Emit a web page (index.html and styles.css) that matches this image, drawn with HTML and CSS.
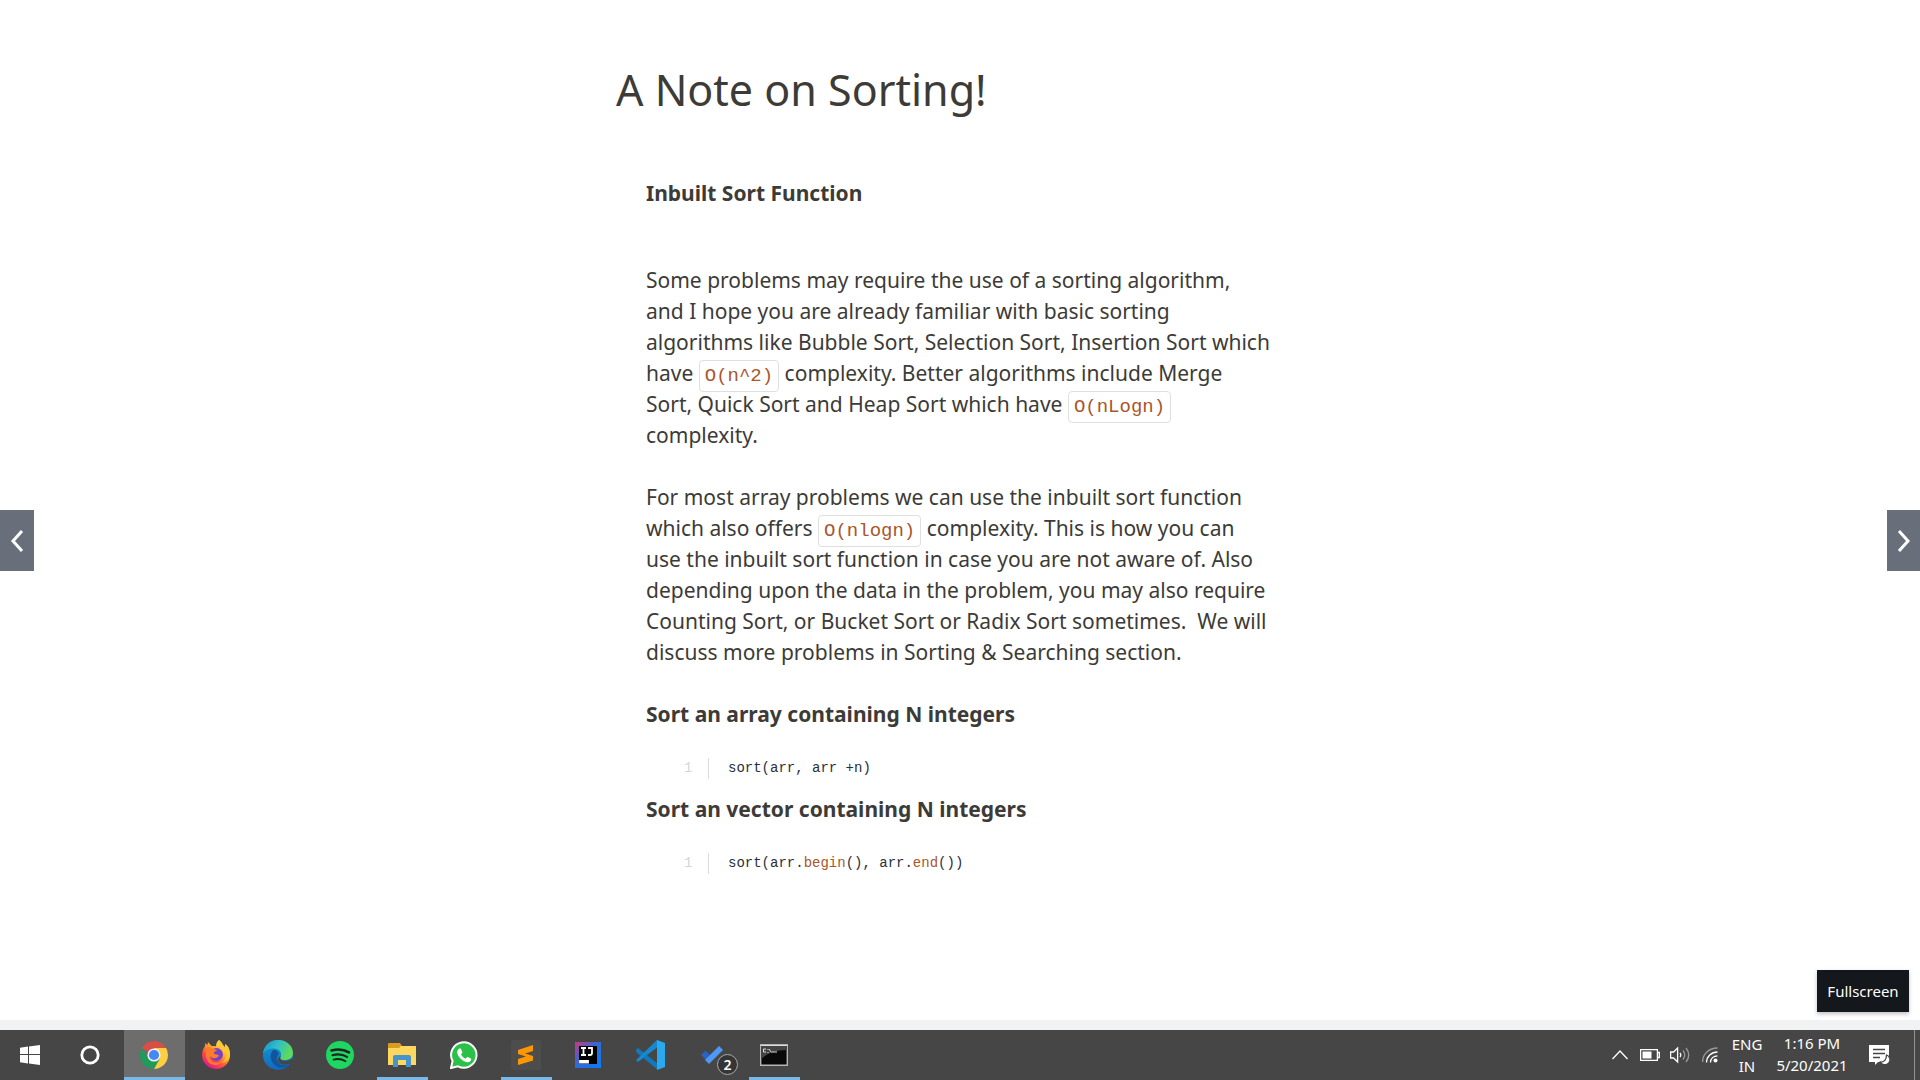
FILE: index.html
```html
<!DOCTYPE html>
<html lang="en">
<head>
<meta charset="utf-8">
<title>A Note on Sorting!</title>
<link rel="stylesheet" href="styles.css">
</head>
<body>
<main class="lecture">
  <article class="note">
    <h1 class="note-title">A Note on Sorting!</h1>
    <div class="note-body">
      <h2 class="section-title lead">Inbuilt Sort Function</h2>
      <p class="para">Some problems may require the use of a sorting algorithm,<br>and I hope you are already familiar with basic sorting<br>algorithms like Bubble Sort, Selection Sort, Insertion Sort which<br>have <code class="pill">O(n^2)</code> complexity. Better algorithms include Merge<br>Sort, Quick Sort and Heap Sort which have <code class="pill">O(nLogn)</code><br>complexity.</p>
      <p class="para">For most array problems we can use the inbuilt sort function<br>which also offers <code class="pill">O(nlogn)</code> complexity. This is how you can<br>use the inbuilt sort function in case you are not aware of. Also<br>depending upon the data in the problem, you may also require<br>Counting Sort, or Bucket Sort or Radix Sort sometimes.&nbsp; We will<br>discuss more problems in Sorting &amp; Searching section.</p>
      <h2 class="section-title">Sort an array containing N integers</h2>
      <div class="code-row"><span class="line-no">1</span><code class="code">sort(arr, arr +n)</code></div>
      <h2 class="section-title">Sort an vector containing N integers</h2>
      <div class="code-row"><span class="line-no">1</span><code class="code">sort(arr.<span class="fn">begin</span>(), arr.<span class="fn">end</span>())</code></div>
    </div>
  </article>
  <button class="nav prev" aria-label="Previous"><svg width="14" height="24" viewBox="0 0 14 24"><path d="M12 2 3 12l9 10"/></svg></button>
  <button class="nav next" aria-label="Next"><svg width="14" height="24" viewBox="0 0 14 24"><path d="m2 2 9 10-9 10"/></svg></button>
  <button class="fullscreen">Fullscreen</button>
</main>
<div class="footer-strip"></div>
<footer class="taskbar">
  <div class="system">
    <button class="task" aria-label="Start"><svg width="20" height="20" viewBox="0 0 20 20" fill="#fff"><path d="M0 2.8 8 1.6V9H0zM9 1.4 20 0v9H9zM0 10h8v8.400L0 17.200zM9 10h11v10L9 18.600z"/></svg></button>
    <button class="task" aria-label="Search"><svg width="20" height="20" viewBox="0 0 20 20"><circle cx="10" cy="10" r="8.200" fill="none" stroke="#fff" stroke-width="2.800"/></svg></button>
  </div>
  <div class="apps">
    <button class="task active" aria-label="Chrome"><svg width="28" height="28" viewBox="0 0 28 28"><path d="M14 14 1.900 7A14 14 0 0 1 26.100 7z" fill="#d94f43"/><path d="M1.900 7A14 14 0 0 0 14 28l6-10.500H8z" fill="#1e9d58"/><path d="M26.100 7H14l6 10.500L14 28A14 14 0 0 0 26.100 7z" fill="#ffcf43"/><circle cx="14" cy="14" r="6.600" fill="#f2f2f2"/><circle cx="14" cy="14" r="5.100" fill="#4587f3"/></svg></button>
    <button class="task" aria-label="Firefox"><svg width="28" height="30" viewBox="0 0 28 30"><defs><linearGradient id="ff" x1=".85" y1=".1" x2=".25" y2=".95"><stop stop-color="#fff34f"/><stop offset=".4" stop-color="#ffa62b"/><stop offset=".7" stop-color="#ff4b45"/><stop offset="1" stop-color="#e3188c"/></linearGradient></defs><path d="M17 0c2 1.500 3 3 3.400 5 1.200.7 2 1.500 2.600 2.600V4c4 4 5.500 8.500 4.900 13A14 14 0 0 1 .1 16C0 12 1 8.500 3 6l.4-3 2 2.300L6 2l3.500 4 4.500.3C14 3.500 15 1.500 17 0z" fill="url(#ff)"/><circle cx="14.500" cy="14.500" r="6.500" fill="#7542c8"/><path d="M4 8c3-2 6-1 7 1l4 .8c-.2 1.600-2.700 1.700-3.200 3C12 15 15.500 14 17 15.500c-2 3.500-6.500 3.500-9 .5-1 6 8 10 13 4-4 8-16 6-17-4z" fill="#ff7c2d"/><path d="M17 0c-3 5 5.500 7 4.500 14 2-1 2-3 1.500-5 4 6 0 12-4 14 7-1 10-7 8.500-13C26.500 6 24.500 5 23 4v3.600C22 5.500 20 4 20 3z" fill="#ffc832"/></svg></button>
    <button class="task" aria-label="Edge"><svg width="30" height="30" viewBox="0 0 30 30"><defs><linearGradient id="eg" x2="1" y2=".4"><stop stop-color="#168ccc"/><stop offset=".5" stop-color="#31bfc9"/><stop offset="1" stop-color="#5fdb58"/></linearGradient><linearGradient id="eb" x2="0" y2="1"><stop stop-color="#139bd9"/><stop offset="1" stop-color="#1368bd"/></linearGradient></defs><circle cx="15" cy="15" r="15" fill="url(#eb)"/><path d="M0 14C1 5 7 0 15 0c9 0 15 6 15 13 0 5-4 7-8 7-4.500 0-6-2-4-4 1-5-3-8-7.500-7.500C5 8.500 1 11 0 14z" fill="url(#eg)"/><path d="M10 10c-4 4-3 12 3 16 5 3.500 11 1.500 15-2-7 3-13 1-14-5-.3-2 .5-4 2-5-1-3-4-5-6-4z" fill="#11569d"/><path d="M18 16c-2 2-.5 5 4 5 3 0 5.500-.9 7.500-3 .5 2-.4 4-1.500 5.300-6 3.200-13 .7-13-3.800 0-1.500 1-3 3-3.500z" fill="#464646"/></svg></button>
    <button class="task" aria-label="Spotify"><svg width="28" height="28" viewBox="0 0 28 28" fill="none" stroke="#222" stroke-linecap="round"><circle cx="14" cy="14" r="14" fill="#1ed760" stroke="none"/><path d="M5.500 9.500c6-1.600 12.500-1 17.500 1.800" stroke-width="2.600"/><path d="M6.500 14.200c5-1.400 10.300-.8 14.500 1.700" stroke-width="2.200"/><path d="M7.500 18.600c4-1 8.500-.6 12 1.600" stroke-width="1.800"/></svg></button>
    <button class="task open" aria-label="File Explorer"><svg width="28" height="24" viewBox="0 0 28 24"><path d="M0 1q0-1 1-1h11l2 3h14v19H1q-1 0-1-1z" fill="#d89c20"/><path d="M0 5h11l2-2h14q1 0 1 1v18H0z" fill="#ffd75e"/><path d="M5 24V14q0-2 2-2h14q2 0 2 2v10h-5v-7h-8v7z" fill="#4793cc"/></svg></button>
    <button class="task" aria-label="WhatsApp"><svg width="28" height="28" viewBox="0 0 28 28"><path d="M1 27 2.600 20A12.700 12.700 0 1 1 8 25.300z" fill="#2bc149" stroke="#fff" stroke-width="2"/><path d="M9.500 7.500h1.300l1.700 4-1.500 2c1 2 2.600 3.300 4.600 4.200l1.700-2 4 2c0 2.500-2 3.800-4 3.500C12 20.500 7.500 15.500 7.200 11c0-1.500 1.200-3 2.300-3.500z" fill="#fff"/></svg></button>
    <button class="task open" aria-label="Sublime Text"><svg width="30" height="30" viewBox="0 0 30 30"><rect width="30" height="30" rx="2" fill="#4d4d4d"/><path d="m7 10 15-5v6l-8 2.500 8 2.500v4.500L7 25v-6l8-2.500L7 14z" fill="#ff9800"/></svg></button>
    <button class="task" aria-label="IntelliJ IDEA"><svg width="28" height="28" viewBox="0 0 28 28"><defs><linearGradient id="ij" x2="1" y2="1"><stop stop-color="#c9387d"/><stop offset=".45" stop-color="#3468d4"/><stop offset="1" stop-color="#087cfa"/></linearGradient></defs><path d="M1 1h26v26H1z" fill="url(#ij)"/><path d="M5 5h18v18H5z"/><path d="M6 20h8v1.500H6zM7 7h5M7 14h5M9.500 7v7M14 7h4v5q0 2-2 2h-2" fill="none" stroke="#fff" stroke-width="1.800"/></svg></button>
    <button class="task" aria-label="Visual Studio Code"><svg width="30" height="30" viewBox="0 0 30 30"><path d="M1 10 3 8 23 24v6L1 12z" fill="#1279bd"/><path d="M1 20 22 0l2 6L3 22z" fill="#1688cf"/><path d="m22 0 8 3v24l-8 3z" fill="#2ba9ef"/></svg></button>
    <button class="task" aria-label="To Do, 2 tasks"><svg width="24" height="20" viewBox="0 0 24 20"><path d="m1 10 4.500-4.500 8 8L9 18z" fill="#2863c5"/><path d="m9 19-4-4L19 1l4 4z" fill="#4f99f5"/></svg><span class="badge">2</span></button>
    <button class="task open" aria-label="Command Prompt"><svg width="28" height="22" viewBox="0 0 28 22"><path d="M.7.7h26.600v20.600H.7z" fill="#090909" stroke="#b5b5b5" stroke-width="1.400"/><path d="M1 1h26v5C16 6 8 9 1 15z" fill="#444"/><path d="M1 1.500h26" stroke="#ddd"/><path d="M6 5H3.500v3H6M8 5v1M8 8v1M9 5l2.500 3.500M12 8h5" fill="none" stroke="#ddd"/></svg></button>
  </div>
  <div class="tray">
    <button class="tray-icon" aria-label="Show hidden icons"><svg width="16" height="10" viewBox="0 0 16 10"><path d="m.5 9 7.500-8 7.500 8"/></svg></button>
    <button class="tray-icon" aria-label="Battery"><svg width="20" height="12" viewBox="0 0 20 12"><path d="M.6.600h16.800v10.800H.6zM17.500 3.500h1.800v5h-1.800"/><path d="M2.500 2.500h9v7h-9z" fill="#fff" stroke="none"/></svg></button>
    <button class="tray-icon" aria-label="Volume"><svg width="20" height="18" viewBox="0 0 20 18"><path d="M.6 6h3l4-4v14l-4-4h-3zM10 7q1.500 2 0 4"/><path class="faint" d="M13 4.500q3.500 4.500 0 9M16 2q5.500 7 0 14"/></svg></button>
    <button class="tray-icon" aria-label="Wi-Fi"><svg width="16" height="16" viewBox="0 0 16 16"><path class="faint" d="M.6 15C.6 7 7 1 15.500 1"/><path d="M4.500 15.500c0-6 5-10.500 11-10.500M8.500 15.500c0-4 3-6.700 7-6.700"/><circle cx="13.500" cy="13.500" r="2" fill="#fff" stroke="none"/></svg></button>
    <button class="lang">ENG<br>IN</button>
    <button class="clock">1:16 PM<br>5/20/2021</button>
    <button class="notify" aria-label="Notifications"><svg width="21" height="20" viewBox="0 0 21 20"><path d="M0 0h20v17H9l-3 3v-3H0z" fill="#fff"/><path d="M4 4.500h12M4 8.500h12M4 12.500h7" stroke="#464646" stroke-width="1.300"/><path d="M17.500 10a5 5 0 1 1-6 7c4 .5 6-3 6-7z" fill="#fff" stroke="#464646" stroke-width="1.300"/></svg></button>
    <button class="desktop" aria-label="Show desktop"></button>
  </div>
</footer>
</body>
</html>
```
FILE: styles.css
```css
* { box-sizing: border-box; }
body {
  margin: 0;
  min-height: 100vh;
  display: flex;
  flex-direction: column;
  background: #fff;
  color: #3c3b37;
  font-family: "Segoe UI", "Noto Sans", sans-serif;
}
button { margin: 0; padding: 0; border: 0; background: none; color: #fff; font: inherit; }
svg { display: block; }

.lecture { position: relative; flex: 1; }
.note { width: 100%; max-width: 688px; margin: 0 auto; padding-top: 58px; }
.note-title { margin: 0; font-size: 43px; line-height: 64px; font-weight: 400; }
.note-body { padding: 56px 30px 0; white-space: nowrap; }
.section-title { margin: 0; font-size: 21px; line-height: 30px; font-weight: 700; }
.section-title.lead { margin-bottom: 57px; }
.para { margin: 0 0 31px; font-size: 21px; line-height: 31px; }
.pill {
  padding: 4px 5px;
  border: 1px solid #dedfe0;
  border-radius: 4px;
  color: #a9562c;
  font-family: Consolas, "Liberation Mono", monospace;
  font-size: 19px;
  line-height: 20px;
}
.code-row {
  display: flex;
  margin: 29px 0 15px 38px;
  font-family: Consolas, "Liberation Mono", monospace;
  font-size: 14px;
  line-height: 21px;
}
.line-no { width: 25px; padding-right: 16px; text-align: right; color: #d5d5d5; border-right: 1px solid #dcdcdc; }
.code { padding-left: 19px; font: inherit; color: #29303b; }
.fn { color: #a9562c; }

.nav {
  position: absolute;
  top: 510px;
  width: 34px;
  height: 61px;
  display: flex;
  align-items: center;
  justify-content: center;
  background: #686f7a;
}
.nav path { fill: none; stroke: #fff; stroke-width: 3; }
.prev { left: 0; }
.next { right: 0; width: 33px; }
.fullscreen {
  position: absolute;
  right: 11px;
  bottom: 8px;
  width: 92px;
  height: 42px;
  background: #14171c;
  box-shadow: 0 2px 4px rgba(0, 0, 0, .25);
  font-size: 15px;
}

.footer-strip { height: 10px; background: #f1f2f4; }
.taskbar { display: flex; height: 50px; background: #464646; }
.system, .apps, .tray { display: flex; }
.system .task { width: 60px; }
.apps { margin-left: 4px; }
.task { position: relative; width: 62px; display: flex; align-items: center; justify-content: center; }
.task.active { width: 61px; background: #6d6d6d; border-bottom: 3px solid #76b9ed; padding: 3px 2px 0 0; }
.task.open::after { content: ""; position: absolute; left: 6px; right: 5px; bottom: 0; height: 3px; background: #76b9ed; }
.badge {
  position: absolute;
  left: 36px;
  top: 24px;
  width: 21px;
  height: 21px;
  border: 1px solid #aaa;
  border-radius: 50%;
  background: #353535;
  font-size: 14px;
  line-height: 19px;
  font-weight: 600;
}
.tray { margin-left: auto; font-size: 15px; line-height: 22px; text-align: center; }
.tray-icon, .notify { width: 30px; display: flex; align-items: center; justify-content: center; }
.tray-icon path { fill: none; stroke: #fff; stroke-width: 1.3; }
.tray-icon path.faint { stroke: #999; }
.tray-icon [fill="#fff"] { fill: #fff; stroke: none; }
.lang { width: 44px; }
.clock { width: 86px; padding-bottom: 2px; }
.notify { width: 48px; }
.desktop { width: 6px; margin-left: 11px; border-left: 1px solid #929292; }
```
